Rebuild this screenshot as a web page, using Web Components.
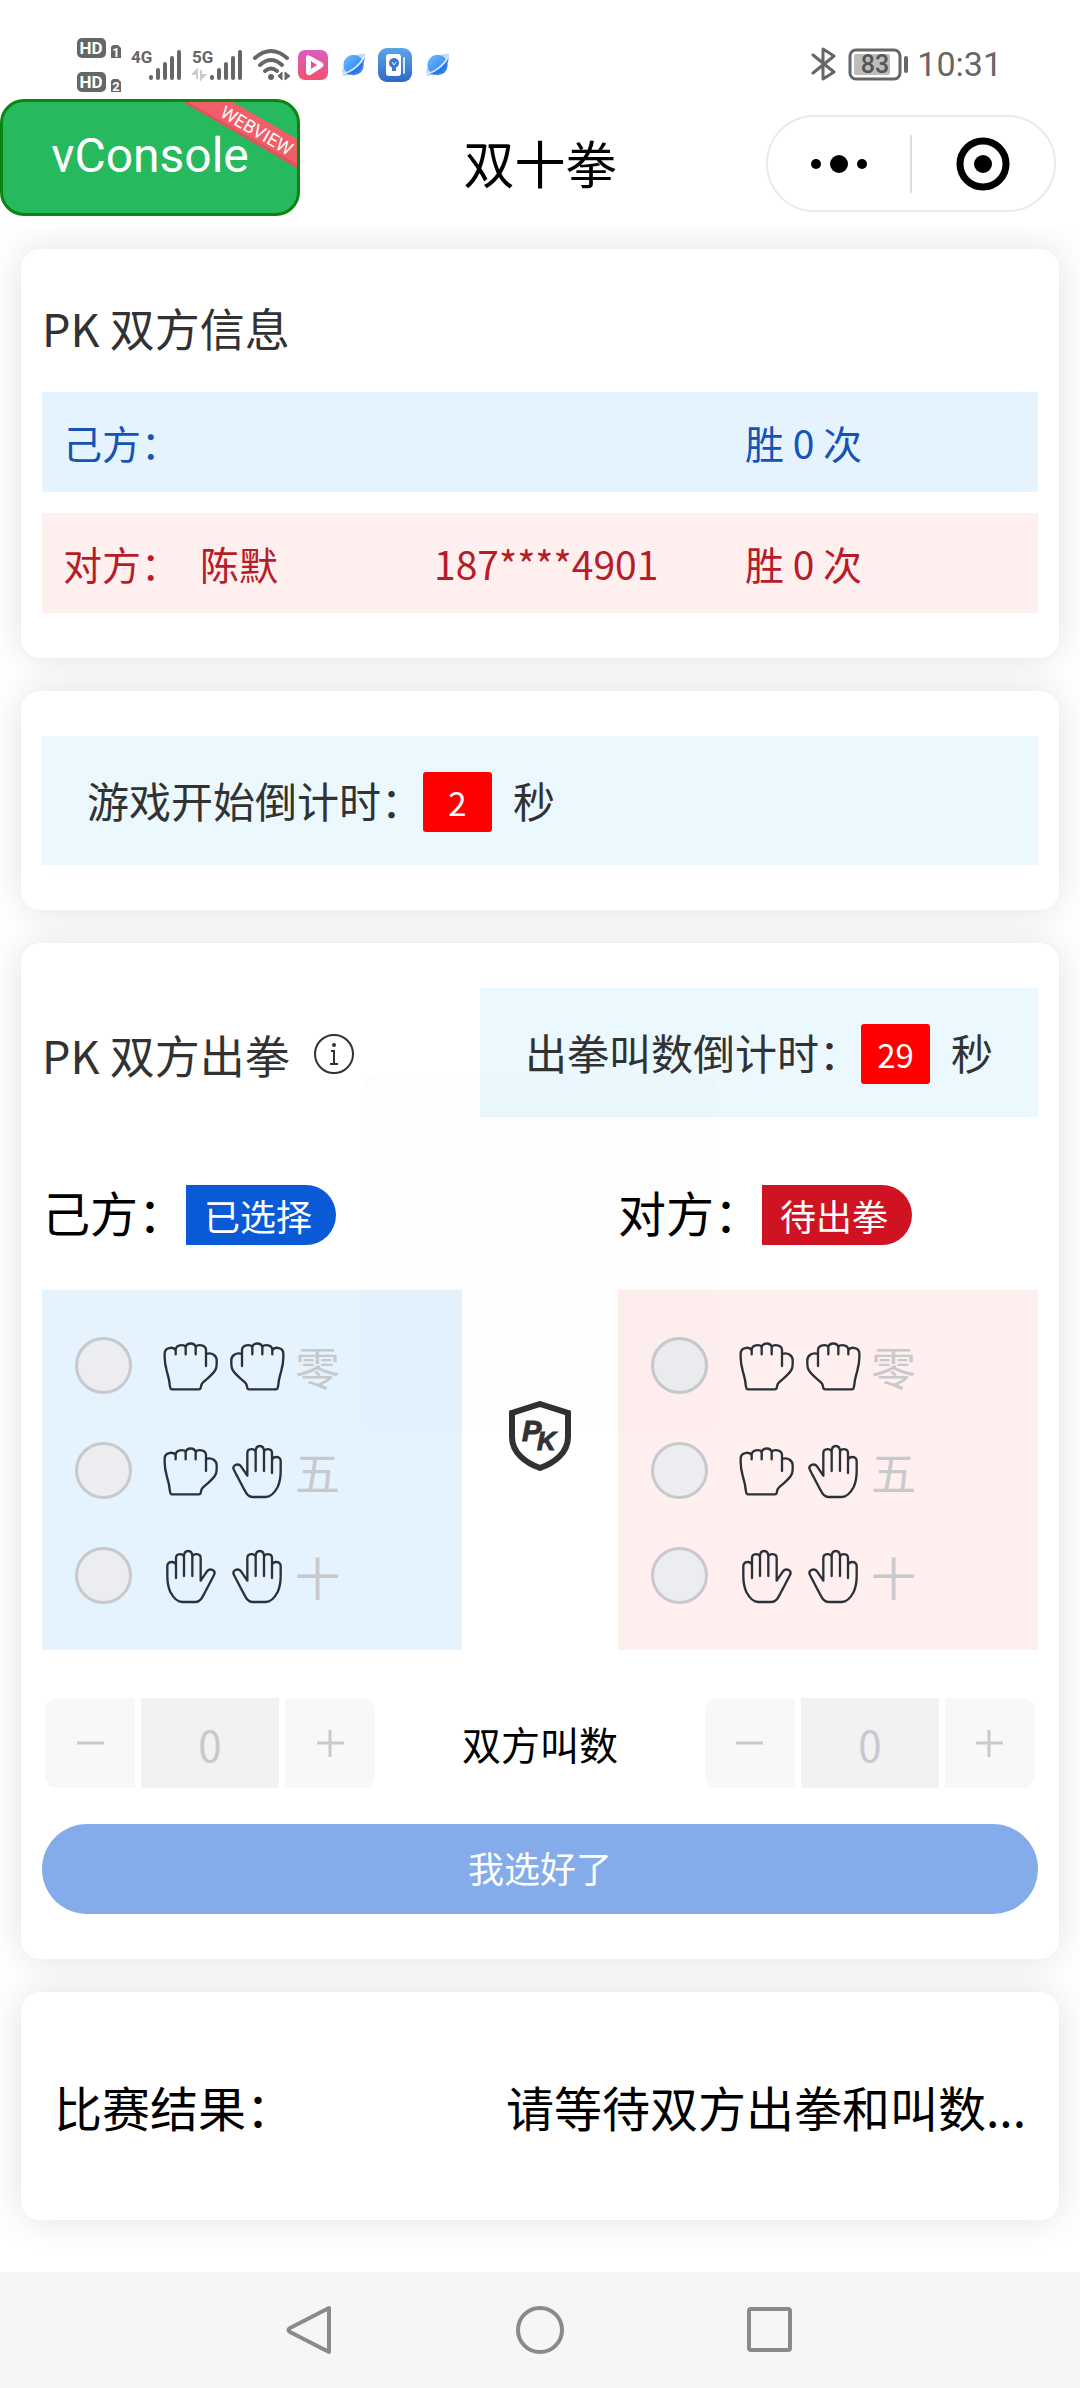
<!DOCTYPE html>
<html lang="zh-CN">
<head>
<meta charset="utf-8">
<meta name="viewport" content="width=device-width, initial-scale=1">
<title>双十拳</title>
<style>
  body { margin: 0; background: #fff; color: #000; font-family: "Noto Sans CJK SC", "Noto Sans", sans-serif; }
</style>
</head>
<body>
<pk-app></pk-app>

<script>
const define = (name, html, setup) => customElements.define(name, class extends HTMLElement {
  connectedCallback() {
    if (this.shadowRoot) return;
    const root = this.attachShadow({ mode: 'open' });
    root.innerHTML = '<style>*{box-sizing:border-box}</style>' + (typeof html === 'function' ? html(this) : html);
    if (setup) setup(root, this);
  }
});

/* ---------- system status bar ---------- */
const planet = `
  <svg width="24" height="26" viewBox="0 0 26 26" aria-hidden="true">
    <path d="M1 25 L0 19 C4 8 14 0 25 1 L25 8 L9 24 Z" fill="#c3d8fb"/>
    <circle cx="12.500" cy="13" r="11" fill="url(#pg)"/>
    <path d="M2 22 C9 22 20 14 24 5 C25 14 15 25 7 23 Z" fill="#2b74ea"/>
    <path d="M1 22 C8 22 20 13 24 4" fill="none" stroke="#dceaff" stroke-width="2"/>
    <defs><linearGradient id="pg" x1="0" y1="0" x2="1" y2="1"><stop offset="0" stop-color="#6cc0ff"/><stop offset="1" stop-color="#2471ee"/></linearGradient></defs>
  </svg>`;
const bars = `<g fill="#666"><rect x="0" y="27" width="4" height="5" rx="2"/><rect x="7" y="20" width="4" height="12" rx="2"/><rect x="14" y="14" width="4" height="18" rx="2"/><rect x="21" y="8" width="4" height="24" rx="2"/><rect x="28" y="2" width="4" height="30" rx="2"/></g>`;
const hd = n => `
  <svg width="45" height="21" viewBox="0 0 45 21">
    <rect x="0" y="0" width="29" height="20" rx="5" fill="#666"/>
    <text x="14" y="16" text-anchor="middle" font-family="Roboto" font-weight="700" font-size="17" fill="#fff">HD</text>
    <path d="M36 7 H41 L44 10 V20 H34 V9 Z" fill="#666"/>
    <text x="39" y="19" text-anchor="middle" font-family="Roboto" font-weight="700" font-size="13" fill="#fff">${n}</text>
  </svg>`;

define('status-bar', `
  <style>
    :host { display: flex; justify-content: space-between; height: 99px; padding: 38px 78px 0 77px; }
    .side { display: flex; align-items: flex-start; }
    .hd { display: flex; flex-direction: column; gap: 13px; margin-right: 9px; }
    .net { margin: 10px 10px 0 0; }
    .wifi { margin: 10px 7px 0 0; }
    .app { margin-top: 12px; }
    .app2 { margin: 14px 12px 0 14px; }
    .app3 { margin-top: 10px; }
    .right { color: #666; gap: 12px; align-items: center; height: 52px; }
    time { font: 400 34px/40px Roboto, sans-serif; margin-left: -4px; }
    svg { display: block; }
  </style>
  <div class="side">
    <div class="hd">${hd(1)}${hd(2)}</div>
    <svg class="net" width="51" height="34" viewBox="0 0 51 34">
      <text x="0" y="15" font-family="Roboto" font-weight="700" font-size="17" fill="#666">4G</text>
      <g transform="translate(18 0)">${bars}</g>
    </svg>
    <svg class="net" width="51" height="34" viewBox="0 0 51 34">
      <text x="0" y="15" font-family="Roboto" font-weight="700" font-size="17" fill="#666">5G</text>
      <path d="M5 31 V22 L1 26 H5 M9 22 V31 L13 27 H9" fill="#ccc" stroke="#ccc" stroke-width="2"/>
      <g transform="translate(18 0)">${bars}</g>
    </svg>
    <svg class="wifi" width="38" height="34" viewBox="0 0 38 34">
      <g fill="none" stroke="#666" stroke-width="4" stroke-linecap="round">
        <path d="M2 10 Q18 -4 34 10"/><path d="M7 17 Q18 7 29 17"/><path d="M12 23 Q18 18 24 23"/>
      </g>
      <circle cx="18" cy="29" r="3" fill="#666"/>
      <path d="M29 24 V32 L25 28 Z M32 24 V32 L37 28 Z" fill="#666" stroke="#666" stroke-width="1"/>
    </svg>
    <svg class="app" width="30" height="30" viewBox="0 0 30 30">
      <defs><linearGradient id="vd" x1="0" y1="0" x2="0" y2="1"><stop offset="0" stop-color="#dc5cc0"/><stop offset="1" stop-color="#f4506e"/></linearGradient></defs>
      <rect width="30" height="30" rx="7" fill="url(#vd)"/>
      <path d="M9 8 Q9 5 12 7 L23 13 Q26 15 23 17 L12 24 Q9 25 9 22 Z" fill="#fff" stroke="#fff" stroke-width="2"/>
      <path d="M13 11 L19 15 L13 19 Z" fill="#e8509a"/>
    </svg>
    <div class="app2">${planet}</div>
    <svg class="app3" width="34" height="34" viewBox="0 0 34 34">
      <defs><linearGradient id="bk" x1="0" y1="0" x2="0" y2="1"><stop offset="0" stop-color="#5aa6e8"/><stop offset="1" stop-color="#2f68c8"/></linearGradient></defs>
      <rect width="34" height="34" rx="9" fill="url(#bk)"/>
      <rect x="8" y="6" width="15" height="22" rx="3" fill="#fff"/>
      <rect x="25" y="9" width="2" height="17" rx="1" fill="#dbe9fa"/>
      <circle cx="16" cy="15" r="5" fill="#3b78d0"/><rect x="14" y="19" width="4" height="4" fill="#3b78d0"/>
      <path d="M14 14 L16 17 L18 14" fill="none" stroke="#fff" stroke-width="1"/>
    </svg>
    <div class="app2">${planet}</div>
  </div>
  <div class="side right">
    <svg width="25" height="34" viewBox="0 0 25 34" fill="none" stroke="#666" stroke-width="3" stroke-linejoin="round" stroke-linecap="round"><path d="M2 8 L23 25 L12 32 V2 L23 9 L2 26"/></svg>
    <svg width="61" height="34" viewBox="0 0 61 34">
      <rect x="2" y="3" width="50" height="29" rx="6" fill="none" stroke="#666" stroke-width="3"/>
      <rect x="6" y="7" width="36" height="21" rx="2" fill="#bdbdbd"/>
      <rect x="56" y="9" width="4" height="17" rx="2" fill="#666"/>
      <text x="27" y="26" text-anchor="middle" font-family="Roboto" font-weight="500" font-size="25" fill="#555">83</text>
    </svg>
    <time>10:31</time>
  </div>`);

/* ---------- mini-program header ---------- */
define('app-header', `
  <style>
    :host { display: grid; grid-template-columns: 1fr auto 1fr; align-items: center; height: 130px; border-bottom: 1px solid #fafafa; }
    button { border: 0; background: none; padding: 0; margin: 0; font: inherit; color: inherit; }
    .console { position: relative; align-self: start; width: 300px; height: 117px; border: 3px solid #0b850f; border-radius: 24px; background: #26b95d; color: #fff; font: 400 48px/60px Roboto, sans-serif; padding-bottom: 3px; }
    .console svg { position: absolute; top: 0; right: 0; display: block; }
    h1 { margin: 0; padding-bottom: 4px; font-size: 51px; line-height: 74px; font-weight: 400; }
    .capsule { justify-self: end; margin-right: 24px; display: flex; align-items: center; width: 290px; height: 97px; border: 2px solid #e9e9e9; border-radius: 49px; }
    .capsule button { flex: 1; display: flex; justify-content: center; align-items: center; height: 100%; }
    .capsule i { width: 2px; height: 58px; background: #dedede; }
  </style>
  <button class="console">vConsole
    <svg width="120" height="70" viewBox="0 0 120 70" aria-hidden="true">
      <path d="M6 0 H56 L120 37 V66 Z" fill="#f25e68"/>
      <path d="M6 0 H11 L120 62 V66 Z" fill="#d9555c"/>
      <text transform="translate(42 14) rotate(30)" font-family="Roboto" font-size="18" fill="#fff">WEBVIEW</text>
    </svg>
  </button>
  <h1>双十拳</h1>
  <div class="capsule">
    <button aria-label="更多"><svg width="58" height="20" viewBox="0 0 58 20"><circle cx="6" cy="10" r="5"/><circle cx="29" cy="10" r="9"/><circle cx="52" cy="10" r="5"/></svg></button>
    <i></i>
    <button aria-label="关闭"><svg width="54" height="54" viewBox="0 0 54 54"><circle cx="27" cy="27" r="23" fill="none" stroke="#000" stroke-width="7"/><circle cx="27" cy="27" r="9"/></svg></button>
  </div>`);

/* ---------- card ---------- */
define('pk-card', `
  <style>
    :host { display: block; position: relative; padding: 45px 21px; border-radius: 20px; background: #fff; }
    :host::before { content: ""; position: absolute; inset: 0; z-index: -1; border-radius: 20px; box-shadow: 0 0 36px rgba(0,0,0,.12); }
  </style><slot></slot>`);

define('player-row', el => `
  <style>
    :host { display: grid; grid-template-columns: 137fr 234fr 311fr 293fr; align-items: center; height: 100px; padding-left: 21px; font-size: 39px; line-height: 56px; background: #e5f3ff; color: #1554b4; }
    :host([side="foe"]) { background: #fff0ef; color: #b81c28; }
    span { white-space: nowrap; }
  </style>
  <span>${el.getAttribute('label')}</span><span>${el.getAttribute('name') || ''}</span><span>${el.getAttribute('phone') || ''}</span><span>胜 ${el.getAttribute('wins')} 次</span>`);

define('count-down', el => `
  <style>
    :host { display: flex; align-items: center; height: 129px; padding: 0 45px; background: #ebf8fe; color: #323233; font-size: 42px; line-height: 60px; white-space: nowrap; }
    b { width: 69px; height: 60px; margin: 2px 21px 0 0; border-radius: 3px; background: #f00; color: #fff; font-size: 33px; line-height: 60px; font-weight: 400; text-align: center; }
    span { padding-bottom: 2px; }
  </style>
  <span><slot></slot></span><b>${el.getAttribute('value')}</b><span>秒</span>`);

/* ---------- hands ---------- */
const fist = '<path d="M51 180 Q46 180 45 172 Q43 150 35 124 Q29 102 29 84 V72 C29 54 55 51 62 62 V75 M62 62 C62 46 86 44 92 53 V75 M92 53 C96 39 118 39 122 53 V75 M122 53 C128 44 153 46 153 62 V110 M153 74 C172 68 185 80 185 92 V106 C185 124 172 134 158 147 L144 159 Q139 164 138 172 Q137 180 132 180 H51"/>';
const palm = '<path d="M63 80 V116 M63 76 V56 C63 41 87 41 87 54 V110 M87 50 C88 30 111 30 112 50 V110 M112 54 C112 41 137 41 137 56 V124 L156 96 C166 84 184 94 177 107 C166 128 156 148 145 168 Q136 188 122 188 H82 Q62 188 46 158 Q37 138 37 110 V80 C37 64 63 64 63 80"/>';
define('hand-icon', el => `
  <style>:host { display: block; width: 66px; height: 66px; } svg { display: block; }</style>
  <svg width="66" height="66" viewBox="9 11 198 198" fill="none" stroke="#293238" stroke-width="7" stroke-linejoin="round" stroke-linecap="round" aria-hidden="true">
    <g${el.hasAttribute('flip') ? ' transform="translate(216 0) scale(-1 1)"' : ''}>${el.getAttribute('shape') === 'fist' ? fist : palm}</g>
  </svg>`);

define('hand-panel', el => {
  const rows = [['fist', 'fist', '零', 0], ['fist', 'palm', '五', 5], ['palm', 'palm', '十', 10]];
  return `
  <style>
    :host { display: block; }
    header { display: flex; align-items: flex-start; height: 60px; margin-bottom: 45px; font-size: 48px; line-height: 52px; white-space: nowrap; }
    mark { height: 60px; padding: 0 24px 0 18px; border-radius: 0 30px 30px 0; background: #0a5ad7; color: #fff; font-size: 36px; line-height: 60px; }
    fieldset { margin: 0; border: 0; padding: 23px 33px 22px; background: #e5f3ff; }
    :host([side="foe"]) mark { background: #cf1322; }
    :host([side="foe"]) fieldset { background: #fff0ef; }
    label { display: flex; align-items: center; height: 105px; color: #c8c9cc; font-size: 45px; line-height: 66px; }
    input { appearance: none; width: 57px; height: 57px; margin: 0 26px 0 0; border: 3px solid #c8c9cc; border-radius: 50%; background: #ebedf0; }
    span { margin-left: 5px; padding-top: 3px; }
  </style>
  <header>${el.getAttribute('label')}<mark>${el.getAttribute('state')}</mark></header>
  <fieldset aria-label="${el.getAttribute('label')}">
    ${rows.map(r => `<label><input type="radio" name="hand" value="${r[3]}" disabled><hand-icon shape="${r[0]}"></hand-icon><hand-icon shape="${r[1]}" flip></hand-icon><span>${r[2]}</span></label>`).join('')}
  </fieldset>`;
});

define('pk-shield', `
  <style>:host { display: block; } svg { display: block; }</style>
  <svg width="64" height="70" viewBox="0 0 64 70" aria-label="PK">
    <path d="M32 3 L60 12 V36 C60 52 46 62 32 67 C18 62 4 52 4 36 V12 Z" fill="#fff" stroke="#323233" stroke-width="6"/>
    <g font-family="Liberation Sans" font-weight="700" font-style="italic" font-size="29" fill="#323233" stroke="#323233" stroke-width="1">
      <text x="14" y="40">P</text>
      <text x="29" y="49" font-size="26">K</text>
    </g>
  </svg>`);

define('num-stepper', el => `
  <style>
    :host { display: flex; gap: 6px; }
    button, input { height: 90px; border: 0; padding: 0; margin: 0; color: #c8c9cc; }
    button { display: flex; align-items: center; justify-content: center; width: 90px; background: #f8f8f8; border-radius: 12px 0 0 12px; }
    button:last-child { border-radius: 0 12px 12px 0; }
    input { width: 138px; background: #f2f2f3; text-align: center; font: 400 42px/60px "Noto Sans CJK SC", sans-serif; border-radius: 0; -webkit-text-fill-color: #c8c9cc; }
  </style>
  <button disabled aria-label="减少"><svg width="27" height="27" stroke="#c8c9cc" stroke-width="3"><path d="M0 13 H27"/></svg></button>
  <input type="text" inputmode="numeric" value="0" disabled aria-label="${el.getAttribute('label')}">
  <button disabled aria-label="增加"><svg width="27" height="27" stroke="#c8c9cc" stroke-width="3"><path d="M0 13 H27 M13 0 V27"/></svg></button>`);

/* ---------- system navigation ---------- */
define('system-nav', `
  <style>
    :host { display: flex; justify-content: center; align-items: center; gap: 180px; height: 116px; background: #f6f6f6; }
    button { border: 0; background: none; padding: 0; width: 50px; height: 50px; }
    svg { display: block; }
  </style>
  <button aria-label="返回"><svg width="50" height="50" fill="none" stroke="#8a8a8a" stroke-width="4" stroke-linejoin="round"><path d="M44 3 V47 L5 27 Q2 25 5 23 Z"/></svg></button>
  <button aria-label="主页"><svg width="50" height="50" fill="none" stroke="#8a8a8a" stroke-width="4"><circle cx="25" cy="25" r="22"/></svg></button>
  <button aria-label="最近任务"><svg width="50" height="50" fill="none" stroke="#8a8a8a" stroke-width="4"><rect x="4" y="4" width="41" height="41" rx="2"/></svg></button>`);

/* ---------- page ---------- */
define('pk-app', `
  <style>
    :host { display: flex; flex-direction: column; min-height: 100vh; }
    main { flex: 1; position: relative; z-index: 0; overflow: hidden; display: flex; flex-direction: column; gap: 33px; padding: 20px 21px 51px; }
    h2 { margin: 0; color: #323233; font-size: 45px; line-height: 68px; font-weight: 400; white-space: nowrap; }
    .info h2 { margin-bottom: 30px; }
    .info player-row + player-row { margin-top: 21px; }
    .head { display: flex; justify-content: space-between; align-items: center; margin-bottom: 68px; }
    .title { display: flex; align-items: center; gap: 24px; padding-top: 4px; }
    .arena { display: grid; grid-template-columns: 420fr 156fr 420fr; align-items: center; margin-bottom: 48px; }
    .arena pk-shield { justify-self: center; margin-top: 36px; }
    .calls { display: flex; justify-content: space-between; align-items: center; padding: 0 3px; margin-bottom: 36px; font-size: 39px; line-height: 56px; }
    .submit { display: block; width: 100%; height: 90px; border: 0; border-radius: 45px; padding: 0 0 4px; background: #84abea; color: #fff; font: 400 36px/54px "Noto Sans CJK SC", sans-serif; }
    .toast { position: absolute; top: 131px; left: 50%; margin-left: -179px; width: 358px; height: 358px; border-radius: 16px; background: rgba(0,0,0,.006); pointer-events: none; }
    .result { display: flex; justify-content: space-between; padding: 33px 12px; font-size: 48px; line-height: 72px; white-space: nowrap; }
    svg { display: block; }
  </style>
  <status-bar></status-bar>
  <app-header></app-header>
  <main>
    <pk-card class="info">
      <h2>PK 双方信息</h2>
      <player-row label="己方：" wins="0"></player-row>
      <player-row side="foe" label="对方：" name="陈默" phone="187****4901" wins="0"></player-row>
    </pk-card>
    <pk-card><count-down value="2">游戏开始倒计时：</count-down></pk-card>
    <pk-card>
      <div class="head">
        <div class="title"><h2>PK 双方出拳</h2>
          <svg width="41" height="41" viewBox="0 0 41 41" fill="none" stroke="#323233" stroke-width="2" role="img" aria-label="说明"><circle cx="20" cy="20" r="19"/><circle cx="20" cy="11" r="2" fill="#323233" stroke="none"/><path d="M17 17 H20 V30 M16 30 H24" stroke-width="2"/></svg>
        </div>
        <count-down value="29">出拳叫数倒计时：</count-down>
      </div>
      <div class="arena">
        <hand-panel label="己方：" state="已选择"></hand-panel>
        <pk-shield></pk-shield>
        <hand-panel side="foe" label="对方：" state="待出拳"></hand-panel>
      </div>
      <div class="calls"><num-stepper label="己方叫数"></num-stepper><span>双方叫数</span><num-stepper label="对方叫数"></num-stepper></div>
      <button class="submit" disabled>我选好了</button>
      <div class="toast"></div>
    </pk-card>
    <pk-card><div class="result"><span>比赛结果：</span><span>请等待双方出拳和叫数...</span></div></pk-card>
  </main>
  <system-nav></system-nav>`);
</script>
</body>
</html>
